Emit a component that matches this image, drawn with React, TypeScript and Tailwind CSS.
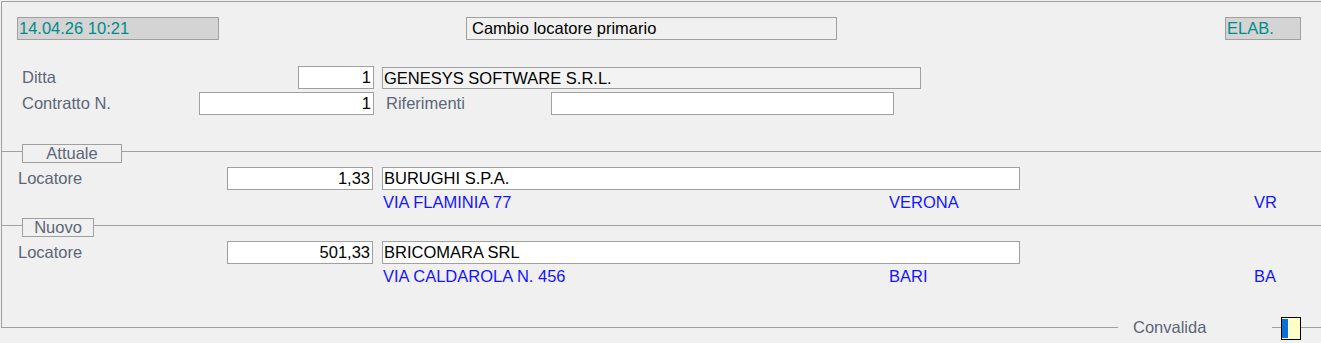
const font = { fontFamily: '"Liberation Sans", Arial, sans-serif' };

function Legend({ label, width }: { label: string; width: string }) {
  return (
    <div className="flex items-start h-[19px]">
      <div className="w-[20px] h-px bg-[#a0a0a0] mt-[7px]" />
      <div
        className={`${width} h-[19px] border border-[#a0a0a0] bg-[#f0f0f0] text-[#5c6678] flex items-center justify-center leading-[16px] pb-[2px]`}
      >
        {label}
      </div>
      <div className="flex-1 h-px bg-[#a0a0a0] mt-[7px]" />
    </div>
  );
}

function Locatore({
  code,
  name,
  street,
  city,
  prov,
}: {
  code: string;
  name: string;
  street: string;
  city: string;
  prov: string;
}) {
  return (
    <>
      <div className="flex h-[23px] mt-[4px] ml-[16px]">
        <div className="w-[209px] leading-[23px] text-[#5c6678]">Locatore</div>
        <div className="w-[146px] bg-white border border-[#a0a0a0] text-right pr-[2px] leading-[21px] text-black">
          {code}
        </div>
        <div className="w-[638px] ml-[9px] bg-white border border-[#a0a0a0] pl-[1px] leading-[21px] text-black">
          {name}
        </div>
      </div>
      <div className="flex h-[23px] mt-[1px] ml-[381px] leading-[23px] text-[#1515ff]">
        <div className="w-[506px]">{street}</div>
        <div className="w-[365px]">{city}</div>
        <div>{prov}</div>
      </div>
    </>
  );
}

export default function App() {
  return (
    <div className="w-[1321px] h-[343px] bg-[#f0f0f0] pt-px overflow-hidden text-[16.5px]" style={font}>
      <div className="relative ml-px w-[1330px] h-[327px] border-l border-t border-b border-[#a0a0a0]">
        {/* header */}
        <div className="flex mt-[15px] ml-[15px] h-[23px]">
          <div className="w-[202px] bg-[#d4d4d4] border border-[#a0a0a0] text-[#008b8b] leading-[21px] pl-px">
            14.04.26 10:21
          </div>
          <div className="w-[371px] ml-[247px] border border-[#a0a0a0] text-black leading-[21px] pl-[5px]">
            Cambio locatore primario
          </div>
          <div className="w-[76px] ml-[388px] bg-[#d4d4d4] border border-[#a0a0a0] text-[#008b8b] leading-[21px] pl-px">
            ELAB.
          </div>
        </div>

        {/* ditta */}
        <div className="flex h-[23px] mt-[26px] ml-[20px]">
          <div className="w-[276px] leading-[23px] text-[#5c6678]">Ditta</div>
          <div className="w-[76px] bg-white border border-[#a0a0a0] text-right pr-[2px] leading-[21px] text-black">
            1
          </div>
          <div className="w-[539px] ml-[8px] mt-px h-[22px] bg-[#f3f3f3] border border-[#a0a0a0] pl-[1px] leading-[20px] text-black">
            GENESYS SOFTWARE S.R.L.
          </div>
        </div>

        {/* contratto */}
        <div className="flex h-[23px] mt-[3px] ml-[20px]">
          <div className="w-[177px] leading-[23px] text-[#5c6678]">Contratto N.</div>
          <div className="w-[175px] bg-white border border-[#a0a0a0] text-right pr-[2px] leading-[21px] text-black">
            1
          </div>
          <div className="w-[165px] ml-[12px] leading-[23px] text-[#5c6678]">Riferimenti</div>
          <div className="w-[343px] bg-white border border-[#a0a0a0]" />
        </div>

        {/* attuale */}
        <div className="mt-[29px]">
          <Legend label="Attuale" width="w-[100px]" />
        </div>
        <Locatore
          code="1,33"
          name="BURUGHI S.P.A."
          street="VIA FLAMINIA 77"
          city="VERONA"
          prov="VR"
        />

        {/* nuovo */}
        <div className="mt-[4px]">
          <Legend label="Nuovo" width="w-[72px]" />
        </div>
        <Locatore
          code="501,33"
          name="BRICOMARA SRL"
          street="VIA CALDAROLA N. 456"
          city="BARI"
          prov="BA"
        />

        {/* convalida on the bottom border */}
        <div className="absolute left-[1116px] top-[315px] flex h-[23px]">
          <div className="w-[15px] h-[23px] bg-[#f0f0f0]" />
          <div className="w-[139px] h-[23px] text-[#5c6678] leading-[21px] bg-[#f0f0f0]">Convalida</div>
          <div className="w-[9px]" />
          <div className="w-[20px] h-[23px] border border-black bg-[#ffffc8] pt-px">
            <div className="w-[6px] h-[19px] bg-[#0a6fd8]" />
          </div>
        </div>
      </div>
    </div>
  );
}
